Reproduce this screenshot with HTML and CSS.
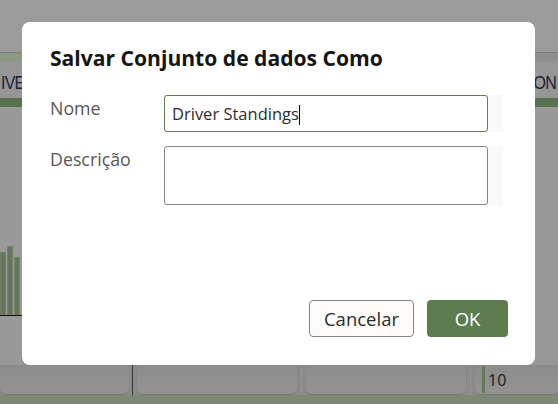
FILE: index.html
```html
<!DOCTYPE html>
<html lang="pt">
<head>
<meta charset="utf-8">
<title>Salvar Conjunto de dados Como</title>
<link rel="stylesheet" href="styles.css">
</head>
<body>
<div class="app">
  <div class="top"></div>
  <div class="band"><div class="band-left"></div><div class="band-right"></div></div>
  <div class="heads"><span class="head-l">IVE</span><span class="head-r">ON</span></div>
  <div class="greenbar"></div>
  <div class="middle">
    <div class="chart">
      <div class="bar" style="height:63px"></div>
      <div class="bar" style="height:69px"></div>
      <div class="bar" style="height:58px"></div>
    </div>
    <div class="axis"></div>
  </div>
  <div class="cards">
    <div class="card c1"></div>
    <div class="sep dark"></div>
    <div class="card c2"></div>
    <div class="sep"></div>
    <div class="card c3"></div>
    <div class="sep"></div>
    <div class="card c4"><span class="mark"></span><span class="num">10</span></div>
  </div>
  <div class="bottom"></div>
</div>

<div class="dialog" role="dialog" aria-labelledby="dlg-title">
  <h1 id="dlg-title" class="title">Salvar Conjunto de dados Como</h1>
  <div class="form">
    <label class="label" for="nome">Nome</label>
    <div class="field"><div class="input focused" id="nome">Driver Standings<span class="caret"></span></div></div>
    <label class="label" for="desc">Descrição</label>
    <div class="field"><div class="textarea" id="desc"></div></div>
  </div>
  <div class="actions">
    <button class="btn secondary">Cancelar</button>
    <button class="btn primary">OK</button>
  </div>
</div>
</body>
</html>
```
FILE: styles.css
```css
* { box-sizing: border-box; }
html, body { margin: 0; padding: 0; }
body {
  width: 558px;
  height: 404px;
  overflow: hidden;
  background: #999999;
  font-family: "Open Sans", "Noto Sans", sans-serif;
}
.app {
  display: flex;
  flex-direction: column;
  height: 404px;
}
.top { height: 52px; background: #9b9b9b; }
.band {
  height: 10px;
  display: flex;
  border-top: 1px solid #7c7c7c;
}
.band-left { width: 30px; background: #8d9985; }
.band-right { flex: 1; background: #8f8f8f; }
.heads {
  height: 36px;
  background: #969696;
  display: flex;
  justify-content: space-between;
  align-items: center;
  font-family: "Liberation Sans", Arial, sans-serif;
  font-size: 16px;
  letter-spacing: -0.8px;
  color: #1b2036;
  padding-top: 6px;
}
.head-l { margin-left: 1px; transform: scaleY(1.2); }
.head-r { margin-right: 2px; transform: scaleY(1.2); }
.greenbar { height: 9px; background: #5a7151; }
.middle {
  height: 258px;
  background: #999999;
  display: flex;
  flex-direction: column;
  justify-content: flex-end;
  padding-bottom: 49px;
}
.chart {
  display: flex;
  align-items: flex-end;
  gap: 1px;
  width: 22px;
  height: 70px;
}
.bar {
  width: 6px;
  background: #64775a;
  border: 1px solid #73846a;
  border-bottom: none;
}
.axis { width: 22px; height: 1px; background: #111; }
.cards {
  height: 30px;
  display: flex;
  background: #8a8a8a;
}
.card {
  background: linear-gradient(#8c8c8c, #939393);
  border-radius: 0 0 6px 6px;
  box-shadow: 0 1px 1px rgba(0,0,0,0.15);
  margin-bottom: 1px;
}
.c1 { width: 129px; margin-right: 3px; }
.c2 { width: 160px; margin-left: 4px; margin-right: 4px; }
.c3 { width: 160px; margin-left: 4px; margin-right: 4px; }
.c4 { flex: 1; margin-left: 4px; display: flex; align-items: center; padding-left: 7px; gap: 3px; }
.sep { width: 1px; background: #959595; }
.sep.dark { background: #2f3a2a; }
.mark { width: 3px; height: 27px; background: #64795a; }
.num { font-family: "Noto Sans", sans-serif; font-size: 16px; color: #262626; }
.bottom { flex: 1; background: #7d8976; }

.dialog {
  position: absolute;
  left: 22px;
  top: 22px;
  width: 513px;
  height: 343px;
  background: #fff;
  border-radius: 8px;
  padding: 21px 27px 28px 28px;
  display: flex;
  flex-direction: column;
}
.title {
  margin: 0;
  font-size: 21.1px;
  font-weight: 700;
  color: #161513;
  line-height: 30px;
}
.form {
  margin-top: 22px;
  display: grid;
  grid-template-columns: 114px 339px;
  row-gap: 14px;
  flex: 1;
  align-content: start;
}
.label {
  font-size: 17.8px;
  color: #5a5754;
  line-height: 26px;
}
.field {
  background: #fafafa;
  padding-right: 15px;
}
.input, .textarea {
  background: #fff;
  border: 1px solid #8a8580;
  border-radius: 3px;
}
.input {
  height: 37px;
  padding: 0 7px;
  font-size: 16.5px;
  color: #2e2d2b;
  line-height: 35px;
}
.input.focused { border-color: #5f7d4f; }
.caret {
  display: inline-block;
  width: 1px;
  height: 20px;
  background: #000;
  vertical-align: -5px;
}
.textarea { height: 59px; }
.actions {
  display: flex;
  justify-content: flex-end;
  gap: 13px;
}
.btn {
  height: 37px;
  border-radius: 4px;
  font-family: "Open Sans", "Noto Sans", sans-serif;
  font-size: 18.5px;
  padding: 0;
}
.secondary {
  width: 105px;
  background: #fcfbfa;
  border: 1px solid #8a8580;
  color: #2e2d2b;
}
.primary {
  width: 81px;
  background: #5e7d4f;
  border: none;
  color: #fff;
}
```
